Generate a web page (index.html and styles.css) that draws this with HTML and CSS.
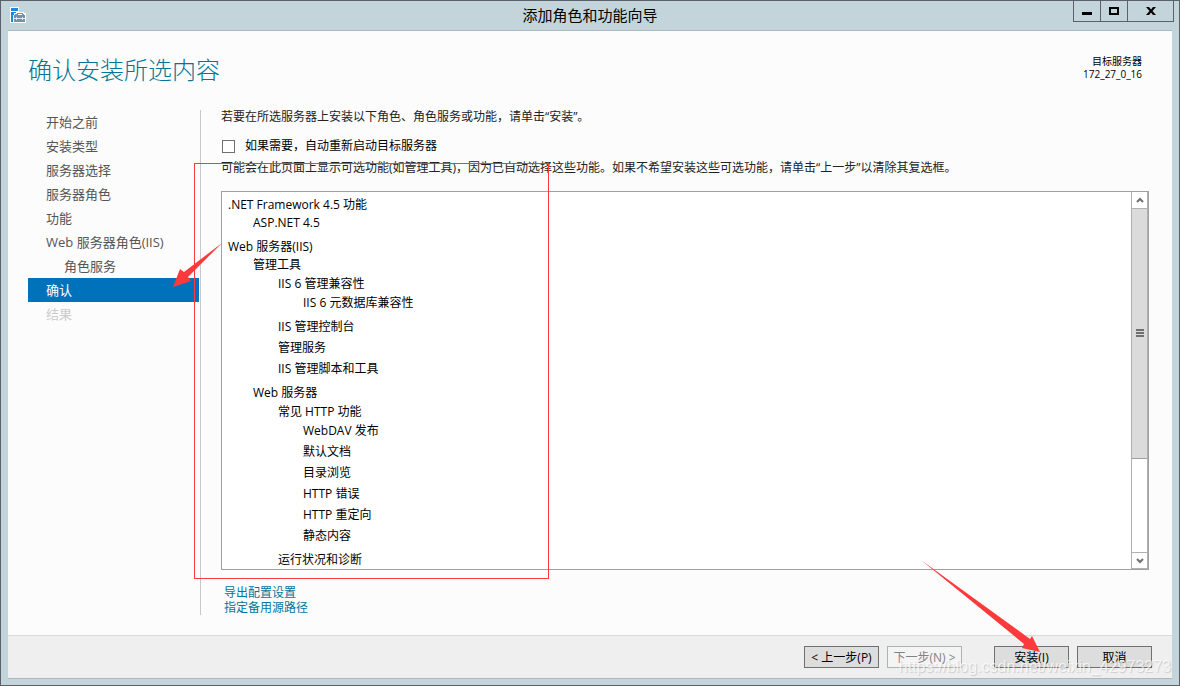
FILE: index.html
```html
<!DOCTYPE html>
<html lang="zh-CN">
<head>
<meta charset="utf-8">
<title>添加角色和功能向导</title>
<link rel="stylesheet" href="styles.css">
</head>
<body>
<div class="window">
  <header class="titlebar">
    <svg class="app-icon" width="16" height="16" viewBox="0 0 16 16" aria-hidden="true">
      <path d="M0 0h9v5h5v1h2v10H0z" fill="#fff"/>
      <path d="M1 1h7v3H1zM1 5h5v1H4v2H3v7H1z" fill="#1b8ad8"/>
      <path d="M4 8h1V7h2V6h6v1h1v1h1v7H4zM8 7v1h4V7z" fill="#7591a3" fill-rule="evenodd"/>
      <path d="M4 11h2v-1h1v1h5v-1h1v1h2v1H13v1h-1v-1H7v1H6v-1H4z" fill="#dfe8ec"/>
    </svg>
    <div class="title">添加角色和功能向导</div>
    <div class="window-controls">
      <button class="control" type="button" aria-label="最小化"><svg width="10" height="10" viewBox="0 0 10 10"><path d="M0 6h10v3H0z"/></svg></button>
      <button class="control" type="button" aria-label="最大化"><svg width="10" height="8" viewBox="0 0 10 8"><path d="M0 0h10v8H0zM2 2v4h6V2z" fill-rule="evenodd"/></svg></button>
      <button class="control control-close" type="button" aria-label="关闭"><svg width="10" height="8" viewBox="0 0 10 8"><path d="M0 0h3l2 2.500L7 0h3L6.500 4 10 8H7L5 5.500 3 8H0l3.500-4z"/></svg></button>
    </div>
  </header>

  <div class="panel">
    <div class="heading">
      <h1>确认安装所选内容</h1>
      <div class="target"><div>目标服务器</div><div>172_27_0_16</div></div>
    </div>

    <div class="body">
      <nav class="steps">
        <a class="step" href="#">开始之前</a>
        <a class="step" href="#">安装类型</a>
        <a class="step" href="#">服务器选择</a>
        <a class="step" href="#">服务器角色</a>
        <a class="step" href="#">功能</a>
        <a class="step" href="#">Web 服务器角色(IIS)</a>
        <a class="step step-sub" href="#">角色服务</a>
        <a class="step step-current" href="#" aria-current="step">确认</a>
        <a class="step step-disabled" aria-disabled="true">结果</a>
      </nav>

      <main class="content">
        <p class="note">若要在所选服务器上安装以下角色、角色服务或功能，请单击“安装”。</p>
        <label class="restart"><input type="checkbox" class="check">如果需要，自动重新启动目标服务器</label>
        <p class="note">可能会在此页面上显示可选功能(如管理工具)，因为已自动选择这些功能。如果不希望安装这些可选功能，请单击“上一步”以清除其复选框。</p>

        <div class="listbox">
          <ul class="tree">
            <li>.NET Framework 4.5 功能
              <ul><li>ASP.NET 4.5</li></ul>
            </li>
            <li>Web 服务器(IIS)
              <ul>
                <li>管理工具
                  <ul>
                    <li>IIS 6 管理兼容性
                      <ul><li>IIS 6 元数据库兼容性</li></ul>
                    </li>
                    <li>IIS 管理控制台</li>
                    <li>管理服务</li>
                    <li>IIS 管理脚本和工具</li>
                  </ul>
                </li>
                <li>Web 服务器
                  <ul>
                    <li>常见 HTTP 功能
                      <ul>
                        <li>WebDAV 发布</li>
                        <li>默认文档</li>
                        <li>目录浏览</li>
                        <li>HTTP 错误</li>
                        <li>HTTP 重定向</li>
                        <li>静态内容</li>
                      </ul>
                    </li>
                    <li>运行状况和诊断</li>
                  </ul>
                </li>
              </ul>
            </li>
          </ul>
          <div class="scrollbar">
            <button class="scroll-button" type="button" aria-label="向上滚动"><svg width="8" height="6" viewBox="0 0 8 6"><path d="M1 5l3-3 3 3"/></svg></button>
            <div class="track"><div class="thumb"><svg width="8" height="9" viewBox="0 0 8 9"><path d="M0 1h8M0 4h8M0 7h8"/></svg></div></div>
            <button class="scroll-button scroll-down" type="button" aria-label="向下滚动"><svg width="8" height="6" viewBox="0 0 8 6"><path d="M1 1l3 3 3-3"/></svg></button>
          </div>
        </div>

        <div class="links">
          <a href="#">导出配置设置</a>
          <a href="#">指定备用源路径</a>
        </div>
      </main>
    </div>

    <footer class="footer">
      <div class="pair">
        <button class="button" type="button">&lt; 上一步(P)</button>
        <button class="button" type="button" disabled>下一步(N) &gt;</button>
      </div>
      <div class="pair">
        <button class="button" type="button">安装(I)</button>
        <button class="button" type="button">取消</button>
      </div>
    </footer>
  </div>

  <svg class="annotations" width="1180" height="686" viewBox="0 0 1180 686" aria-hidden="true">
    <rect x="194.500" y="163.500" width="354" height="415" fill="none" stroke="#fb3b3b"/>
    <path d="M222 243L184 272L180 269L173 287L191 281L188 277Z" fill="#fb3b3b"/>
    <path d="M921 560L1030 639L1032 636L1040 652L1022 648L1024 644Z" fill="#fb3b3b"/>
  </svg>
  <div class="watermark">https://blog.csdn.net/weixin_42973273</div>
</div>
</body>
</html>
```
FILE: styles.css
```css
* {
  box-sizing: border-box;
}

body {
  margin: 0;
  font: 12px/18px "Open Sans", "Noto Sans CJK SC", sans-serif;
  color: #000;
}

h1, p, ul {
  margin: 0;
  padding: 0;
}

button {
  margin: 0;
  padding: 0;
  font: inherit;
  color: inherit;
}

.window {
  position: relative;
  display: flex;
  flex-direction: column;
  height: 100vh;
  padding: 0 7px 6px;
  overflow: hidden;
  background: #c3d5da;
  border: 1px solid #5c606a;
}

.titlebar {
  display: grid;
  grid-template-columns: 1fr auto 1fr;
  flex: none;
  height: 29px;
}

.app-icon {
  margin: 6px 2px;
}

.title {
  font-size: 15px;
  line-height: 28px;
}

.window-controls {
  display: flex;
  justify-self: end;
  height: 21px;
  margin-right: -2px;
  border: solid #5c606a;
  border-width: 0 1px 1px;
}

.control {
  display: flex;
  align-items: center;
  justify-content: center;
  width: 27px;
  background: none;
  border: 0;
  border-right: 1px solid #5c606a;
}

.control-close {
  width: 45px;
  border-right: 0;
}

.panel {
  display: flex;
  flex: 1;
  flex-direction: column;
  min-height: 0;
  background: #fcfcfc;
  border: solid #aab8bf;
  border-width: 1px 0;
}

.heading {
  display: flex;
  justify-content: space-between;
  padding: 24px 30px 0 20px;
}

h1 {
  font-size: 24px;
  font-weight: 300;
  line-height: 30px;
  color: #00759a;
}

.target {
  font-size: 10px;
  line-height: 13px;
  text-align: right;
}

.body {
  display: flex;
  flex: 1;
  min-height: 0;
  padding: 25px 23px 20px 20px;
}

.steps {
  flex: none;
  width: 173px;
  padding-right: 1px;
  font-size: 13px;
  line-height: 24px;
  border-right: 1px solid #c8c8c8;
}

.step {
  display: block;
  padding-left: 18px;
  color: #555;
  text-decoration: none;
}

.step-sub {
  padding-left: 36px;
}

.step-current {
  color: #fff;
  background: #0072bc;
}

.step-disabled {
  color: #ccc;
}

.content {
  display: flex;
  flex: 1;
  flex-direction: column;
  min-width: 0;
  padding-left: 20px;
}

.note {
  line-height: 14px;
  color: #222;
}

.restart {
  display: flex;
  gap: 10px;
  align-items: center;
  padding: 13px 0 6px 1px;
}

.check {
  width: 13px;
  height: 13px;
  margin: 0;
  appearance: none;
  background: #fff;
  border: 1px solid #707070;
}

.listbox {
  display: flex;
  flex: 1;
  min-height: 0;
  margin-top: 16px;
  overflow: hidden;
  background: #fff;
  border: 1px solid #a0a0a0;
}

.tree {
  flex: 1;
  padding: 4px 6px;
}

.tree ul {
  padding-left: 25px;
}

.tree ul ul {
  padding-top: 1px;
}

.tree li {
  padding-bottom: 3px;
  list-style: none;
}

.scrollbar {
  display: flex;
  flex-direction: column;
  width: 17px;
  border: solid #b0b0b0;
  border-width: 0 1px;
}

.scrollbar svg {
  fill: none;
  stroke: #707070;
  stroke-width: 2;
}

.scroll-button {
  display: flex;
  align-items: center;
  justify-content: center;
  height: 17px;
  background: #fff;
  border: 0;
  border-bottom: 1px solid #b0b0b0;
}

.scroll-down {
  border-top: 1px solid #b0b0b0;
}

.track {
  flex: 1;
}

.thumb {
  display: flex;
  align-items: center;
  justify-content: center;
  height: 73%;
  background: #dbdbdb;
  border-bottom: 1px solid #a0a0a0;
}

.links {
  display: flex;
  flex-direction: column;
  align-items: flex-start;
  padding: 15px 3px 0;
  line-height: 15px;
}

.links a {
  color: #00759a;
  text-decoration: none;
}

.footer {
  display: flex;
  flex: none;
  gap: 32px;
  justify-content: flex-end;
  padding: 10px 20px;
  background: #efefef;
  border-top: 1px solid #dadada;
}

.pair {
  display: flex;
  gap: 8px;
}

.button {
  width: 75px;
  height: 22px;
  padding-top: 2px;
  line-height: 18px;
  white-space: nowrap;
  background: #ddd;
  border: 1px solid #707070;
}

.button:disabled {
  color: #838383;
  background: #f4f4f4;
  border-color: #adb2b5;
}

.annotations {
  position: absolute;
  top: -1px;
  left: -1px;
  pointer-events: none;
}

.watermark {
  position: absolute;
  right: 8px;
  bottom: 8px;
  font: 16px/20px "Liberation Sans", sans-serif;
  color: rgba(255, 255, 255, 0.7);
  text-shadow: 1px 1px 1px rgba(0, 0, 0, 0.15);
  pointer-events: none;
}
```
